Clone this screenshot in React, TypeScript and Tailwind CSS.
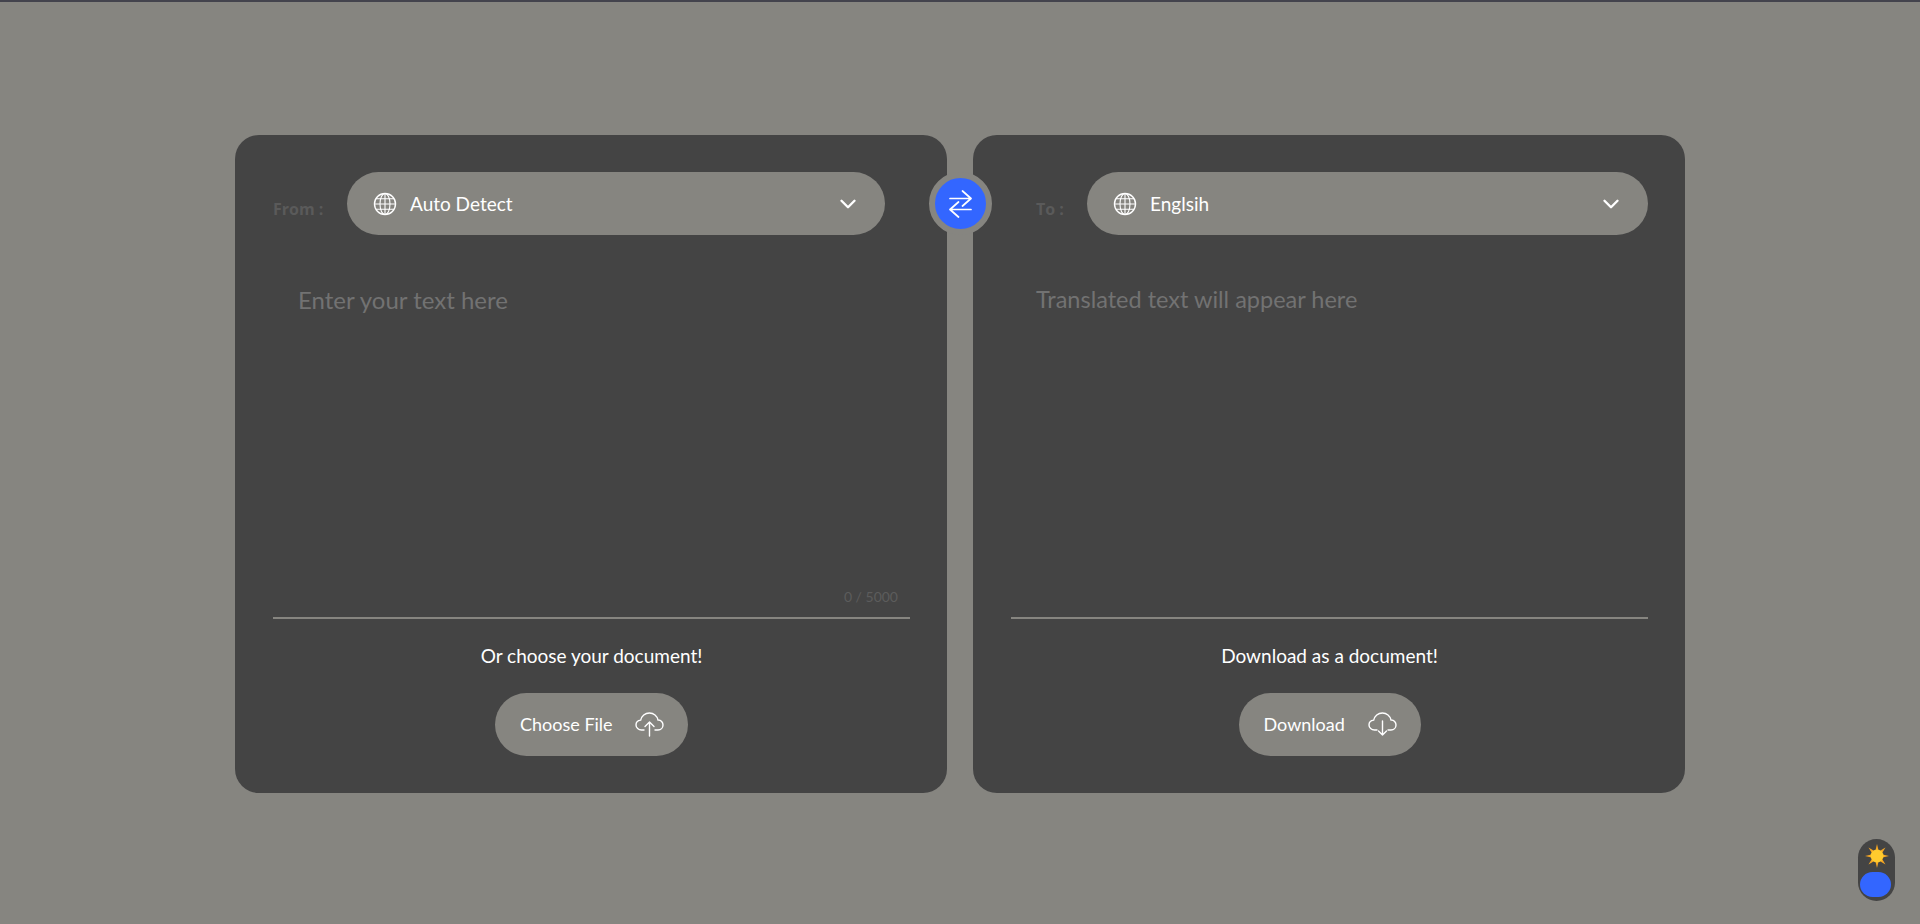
import { ChevronDown } from 'lucide-react';

const bg = 'bg-[#868580]';

function GlobeIcon() {
  return (
    <svg width="24" height="24" viewBox="0 0 24 24" fill="none" stroke="white" strokeWidth="1.1">
      <circle cx="12" cy="12" r="10.500" strokeWidth="1.400" />
      <ellipse cx="12" cy="12" rx="5" ry="10.500" />
      <path d="M12 1.500v21M1.500 12h21M3 6.800h18M3 17.200h18" />
    </svg>
  );
}

function CloudIcon({ down }: { down?: boolean }) {
  return (
    <svg className="translate-x-[1px]" width="29" height="26" viewBox="0 0 29 26" fill="none" stroke="white" strokeWidth="1.4" strokeLinecap="round" strokeLinejoin="round">
      <path d="M9 19H6.500C3.500 19 1 16.800 1 14c0-2.600 2-4.600 4.700-4.900C6.600 5.200 10 2 14.400 2c4.300 0 7.800 3 8.600 7 .1 0 .3 0 .4 0C25.900 9 28 11.200 28 14c0 2.800-2.200 5-5 5h-3" />
      {down ? (
        <path d="M14.500 10v14M10.500 20l4 4 4-4" />
      ) : (
        <path d="M14.500 25V11M10 15.500l4.500-4.500 4.500 4.500" />
      )}
    </svg>
  );
}

function SunIcon() {
  return (
    <svg width="24" height="24" viewBox="0 0 24 24">
      <path
        fill="#f5a623"
        d="M12 0l1.800 7.600 6.700-4.100-4.100 6.700L24 12l-7.600 1.800 4.100 6.700-6.700-4.100L12 24l-1.800-7.600-6.700 4.100 4.100-6.700L0 12l7.600-1.800-4.100-6.700 6.700 4.100z"
      />
      <circle cx="12" cy="12" r="6.500" fill="#ffcb2e" />
    </svg>
  );
}

function LangSelect({ label, value, labelClass, selectClass }: { label: string; value: string; labelClass: string; selectClass: string }) {
  return (
    <div className="flex items-center">
      <span className={`${labelClass} shrink-0 pt-2.5 text-[16px] font-bold text-[#5a5a5a] font-['Open_Sans',sans-serif]`}>{label}</span>
      <div className={`flex h-[63px] flex-1 items-center rounded-full ${bg} pl-[26px] pr-[24px] text-white ${selectClass}`}>
        <GlobeIcon />
        <span className="ml-[13px] flex-1 pt-0.5 text-[19px]">{value}</span>
        <ChevronDown size={26} strokeWidth={2.2} />
      </div>
    </div>
  );
}

function Panel({ children, width }: { children: React.ReactNode; width: string }) {
  return <section className={`flex h-[658px] ${width} flex-col rounded-[24px] bg-[#444444] pl-[38px] pr-[37px] pt-[37px]`}>{children}</section>;
}

export default function App() {
  return (
    <div className={`relative flex h-[924px] flex-col overflow-hidden border-t-2 border-[#43434d] ${bg} font-['Lato',sans-serif]`}>
      <main className="flex gap-[25px] pl-[235px] pt-[133px]">
        <Panel width="w-[712px]">
          <LangSelect label="From :" value="Auto Detect" labelClass="w-[74px]" selectClass="mr-[25px]" />
          <div className="relative h-[384px] border-b-2 border-[#868580]">
            <p className="pl-[25px] pt-[47px] text-[24px] text-[#727272]">Enter your text here</p>
            <span className="absolute bottom-[10px] right-[12px] text-[14px] text-[#5c5c5c]">0 / 5000</span>
          </div>
          <p className="mt-[23px] text-center text-[19px] text-white">Or choose your document!</p>
          <div className="mt-[22px] flex justify-center">
            <button className={`flex h-[63px] w-[193px] items-center justify-between rounded-full ${bg} px-[25px] text-[18px] text-white`}>
              Choose File
              <CloudIcon />
            </button>
          </div>
        </Panel>
        <Panel width="w-[712px] ml-[1px]">
          <LangSelect label="To :" value="Englsih" labelClass="w-[76px] pl-[25px]" selectClass="" />
          <div className="h-[384px] border-b-2 border-[#868580]">
            <p className="pl-[25px] pt-[47px] text-[23.500px] text-[#727272]">Translated text will appear here</p>
          </div>
          <p className="mt-[23px] text-center text-[19px] text-white">Download as a document!</p>
          <div className="mt-[22px] flex justify-center">
            <button className={`flex h-[63px] w-[182px] items-center justify-between rounded-full ${bg} px-[25px] text-[18px] text-white`}>
              Download
              <CloudIcon down />
            </button>
          </div>
        </Panel>
      </main>

      {/* swap button sits over the gap between panels */}
      <button className="absolute left-[929px] top-[170px] flex h-[63px] w-[63px] items-center justify-center rounded-full border-[6px] border-[#868580] bg-[#3366ff]">
        <svg width="23" height="28" viewBox="0 0 23 28" fill="none" stroke="white" strokeWidth="1.700" strokeLinecap="round" strokeLinejoin="round">
          <path d="M1 8.500h21M13.500 1l8.500 7.500-8.500 7.500" />
          <path d="M22 19.500H1M9.500 12L1 19.500 9.500 27" />
        </svg>
      </button>

      {/* theme toggle */}
      <div className="absolute bottom-[23px] right-[25px] flex h-[62px] w-[37px] flex-col items-center rounded-full bg-[#444444]">
        <span className="mt-[5px]"><SunIcon /></span>
        <span className="absolute bottom-[4px] left-[2px] h-[25px] w-[31px] rounded-full bg-[#3366ff]" />
      </div>
    </div>
  );
}
